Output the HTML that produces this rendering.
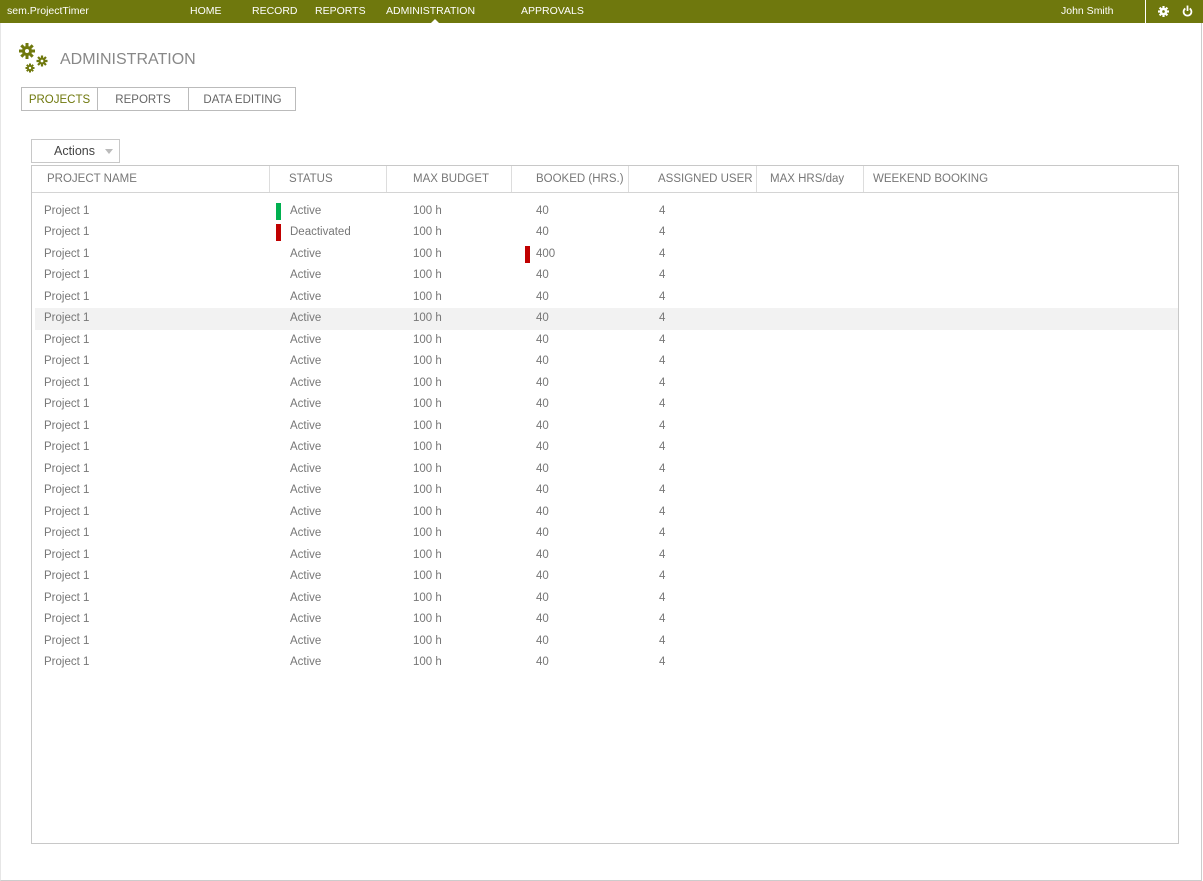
<!DOCTYPE html>
<html><head><style>
*{margin:0;padding:0;box-sizing:border-box}
body{width:1203px;height:881px;background:#fff;font-family:"Liberation Sans",sans-serif;position:relative;overflow:hidden;color:#666}
.frame{position:absolute;left:0;top:0;width:1202px;height:881px;border-right:1px solid #ccc;border-bottom:1px solid #ccc;border-left:1px solid #e6e6e6}
.top{position:absolute;left:0;top:0;width:1203px;height:23px;background:#6f780d;color:#fff;font-size:10.5px}
.top span{position:absolute;top:5px}
.abs{position:absolute}
.tabs{position:absolute;left:21px;top:87px;width:275px;height:24px;border:1px solid #bbb;font-size:11.5px}
.tabs div{position:absolute;top:0;height:22px;line-height:24px;text-align:center}
.tbl{position:absolute;left:31px;top:165px;width:1148px;height:679px;border:1px solid #c8c8c8}
.hd{position:absolute;left:0;top:0;width:100%;height:27px;border-bottom:1px solid #d4d4d4;font-size:11.5px;color:#777}
.hd span{position:absolute;top:7px}
.hd i{position:absolute;top:0;height:26px;width:1px;background:#ddd}
.row{position:absolute;left:3px;width:1143px;height:21.5px;font-size:11.5px;color:#777}
.row span{position:absolute;top:4px}
.bar{position:absolute;width:5px;height:17px;top:2px}
</style></head><body>
<div class="frame"></div>
<div class="top">
<span style="left:7px">sem.ProjectTimer</span>
<span style="left:190px">HOME</span>
<span style="left:252px">RECORD</span>
<span style="left:315px">REPORTS</span>
<span style="left:386px">ADMINISTRATION</span>
<span style="left:521px">APPROVALS</span>
<span style="left:1061px">John Smith</span>
<div class="abs" style="left:1145px;top:0;width:1px;height:23px;background:#fff"></div>
<svg class="abs" style="left:1158px;top:6px" width="11" height="11" viewBox="0 0 10 10"><g fill="#fff"><circle cx="5" cy="5" r="3.4"/><rect x="4" y="0" width="2" height="10"/><rect x="0" y="4" width="10" height="2"/><rect x="4" y="0" width="2" height="10" transform="rotate(45 5 5)"/><rect x="4" y="0" width="2" height="10" transform="rotate(-45 5 5)"/></g><circle cx="5" cy="5" r="1.2" fill="#6f780d"/></svg>
<svg class="abs" style="left:1182px;top:5px" width="11" height="12" viewBox="0 0 10 11"><path d="M3 3.2A3.6 3.6 0 1 0 7 3.2" fill="none" stroke="#fff" stroke-width="1.6"/><rect x="4.2" y="0.5" width="1.6" height="5" fill="#fff"/></svg>
<div class="abs" style="left:431px;top:19px;width:0;height:0;border-left:4px solid transparent;border-right:4px solid transparent;border-bottom:4px solid #fff"></div>
</div>
<svg class="abs" style="left:18px;top:42px" width="32" height="32" viewBox="0 0 32 32"><g fill="#6f780d">
<circle cx="9" cy="9" r="5"/><g stroke="#6f780d" stroke-width="3"><path d="M9 1v16M1 9h16M3.3 3.3l11.4 11.4M14.7 3.3L3.3 14.7"/></g>
<circle cx="24" cy="19" r="3.5"/><g stroke="#6f780d" stroke-width="2.2"><path d="M24 13.5v11M18.5 19h11M20 15l8 8M28 15l-8 8"/></g>
<circle cx="12" cy="26" r="3"/><g stroke="#6f780d" stroke-width="2"><path d="M12 21.5v9M7.5 26h9M8.8 22.8l6.4 6.4M15.2 22.8l-6.4 6.4"/></g></g>
<circle cx="9" cy="9" r="2" fill="#fff"/><circle cx="24" cy="19" r="1.4" fill="#fff"/><circle cx="12" cy="26" r="1.2" fill="#fff"/></svg>
<div class="abs" style="left:60px;top:51px;font-size:16px;color:#888">ADMINISTRATION</div>
<div class="tabs">
<div style="left:0;width:75px;color:#6f780d">PROJECTS</div>
<div style="left:75px;width:91px;border-left:1px solid #bbb">REPORTS</div>
<div style="left:166px;width:108px;border-left:1px solid #bbb">DATA EDITING</div>
</div>
<div class="abs" style="left:31px;top:139px;width:89px;height:24px;border:1px solid #c8c8c8;font-size:12.5px;color:#444"><span class="abs" style="left:22px;top:4px">Actions</span><span class="abs" style="left:73px;top:9px;border-left:4px solid transparent;border-right:4px solid transparent;border-top:5px solid #bbb"></span></div>
<div class="tbl">
<div class="hd">
<span style="left:15px">PROJECT NAME</span><i style="left:237px"></i>
<span style="left:257px">STATUS</span><i style="left:354px"></i>
<span style="left:381px">MAX BUDGET</span><i style="left:479px"></i>
<span style="left:504px">BOOKED (HRS.)</span><i style="left:596px"></i>
<span style="left:626px">ASSIGNED USER</span><i style="left:724px"></i>
<span style="left:738px">MAX HRS/day</span><i style="left:831px"></i>
<span style="left:841px">WEEKEND BOOKING</span>
</div>
<div id="rows"></div>
</div>
<script>
var h='';for(var i=0;i<22;i++){var t=34.5+i*21.52;var st=i==1?'Deactivated':'Active';
h+='<div class="row" style="top:'+t+'px;'+(i==5?'background:#f2f2f2':'')+'">'+
'<span style="left:9px">Project 1</span>'+
(i==0?'<div class="bar" style="left:241px;background:#00b050"></div>':'')+
(i==1?'<div class="bar" style="left:241px;background:#c00000"></div>':'')+
(i==2?'<div class="bar" style="left:490px;background:#c00000"></div>':'')+
'<span style="left:255px">'+st+'</span><span style="left:378px">100 h</span><span style="left:501px">'+(i==2?'400':'40')+'</span><span style="left:624px">4</span></div>';}
document.getElementById('rows').innerHTML=h;
</script>
</body></html>
